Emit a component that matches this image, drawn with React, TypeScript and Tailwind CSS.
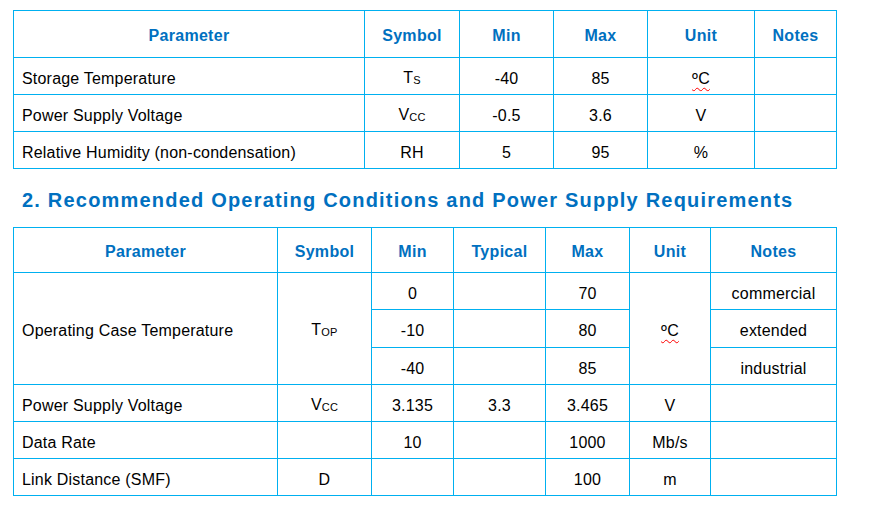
import React from "react";

const B = "border border-[#00B0F0]";
const TH = `${B} text-center font-bold text-[#0070C0] pt-[3px] tracking-[0.3px]`;
const TD = `${B} text-center pt-[5px] tracking-[0.2px]`;
const TDL = `${B} text-left pl-[8px] pt-[5px] tracking-[0.2px]`;

function Sym({ main, sub }: { main: string; sub: string }) {
  return (
    <span>
      {main}
      <span className="text-[11px] align-[-1px]">{sub}</span>
    </span>
  );
}

function Deg() {
  return (
    <span className="underline decoration-wavy decoration-[#ff0000] decoration-1 underline-offset-[3px]">
      ºC
    </span>
  );
}

export default function App() {
  return (
    <div
      className="bg-white w-[872px] h-[523px] pt-[10px] pl-[13px] text-black text-[16px] leading-[18px]"
      style={{ fontFamily: '"Liberation Sans", Arial, sans-serif' }}
    >
      <table className="border-collapse table-fixed w-[824px]">
        <colgroup>
          <col className="w-[351px]" />
          <col className="w-[95px]" />
          <col className="w-[94px]" />
          <col className="w-[94px]" />
          <col className="w-[107px]" />
          <col className="w-[82px]" />
        </colgroup>
        <tbody>
          <tr className="h-[47px]">
            <td className={TH}>Parameter</td>
            <td className={TH}>Symbol</td>
            <td className={TH}>Min</td>
            <td className={TH}>Max</td>
            <td className={TH}>Unit</td>
            <td className={TH}>Notes</td>
          </tr>
          <tr className="h-[37px]">
            <td className={TDL}>Storage Temperature</td>
            <td className={TD}>
              <Sym main="T" sub="S" />
            </td>
            <td className={TD}>-40</td>
            <td className={TD}>85</td>
            <td className={TD}>
              <Deg />
            </td>
            <td className={TD}></td>
          </tr>
          <tr className="h-[37px]">
            <td className={TDL}>Power Supply Voltage</td>
            <td className={TD}>
              <Sym main="V" sub="CC" />
            </td>
            <td className={TD}>-0.5</td>
            <td className={TD}>3.6</td>
            <td className={TD}>V</td>
            <td className={TD}></td>
          </tr>
          <tr className="h-[37px]">
            <td className={TDL}>Relative Humidity (non-condensation)</td>
            <td className={TD}>RH</td>
            <td className={TD}>5</td>
            <td className={TD}>95</td>
            <td className={TD}>%</td>
            <td className={TD}></td>
          </tr>
        </tbody>
      </table>

      <div className="mt-[19px] mb-[15px] pl-[9px] text-[20px] leading-[24px] font-bold text-[#0070C0] tracking-[1.2px]">
        2. Recommended Operating Conditions and Power Supply Requirements
      </div>

      <table className="border-collapse table-fixed w-[824px]">
        <colgroup>
          <col className="w-[264px]" />
          <col className="w-[94px]" />
          <col className="w-[82px]" />
          <col className="w-[92px]" />
          <col className="w-[84px]" />
          <col className="w-[81px]" />
          <col className="w-[126px]" />
        </colgroup>
        <tbody>
          <tr className="h-[45px]">
            <td className={TH}>Parameter</td>
            <td className={TH}>Symbol</td>
            <td className={TH}>Min</td>
            <td className={TH}>Typical</td>
            <td className={TH}>Max</td>
            <td className={TH}>Unit</td>
            <td className={TH}>Notes</td>
          </tr>
          <tr className="h-[37px]">
            <td className={TDL} rowSpan={3}>
              Operating Case Temperature
            </td>
            <td className={TD} rowSpan={3}>
              <Sym main="T" sub="OP" />
            </td>
            <td className={TD}>0</td>
            <td className={TD}></td>
            <td className={TD}>70</td>
            <td className={TD} rowSpan={3}>
              <Deg />
            </td>
            <td className={TD}>commercial</td>
          </tr>
          <tr className="h-[38px]">
            <td className={TD}>-10</td>
            <td className={TD}></td>
            <td className={TD}>80</td>
            <td className={TD}>extended</td>
          </tr>
          <tr className="h-[37px]">
            <td className={TD}>-40</td>
            <td className={TD}></td>
            <td className={TD}>85</td>
            <td className={TD}>industrial</td>
          </tr>
          <tr className="h-[37px]">
            <td className={TDL}>Power Supply Voltage</td>
            <td className={TD}>
              <Sym main="V" sub="CC" />
            </td>
            <td className={TD}>3.135</td>
            <td className={TD}>3.3</td>
            <td className={TD}>3.465</td>
            <td className={TD}>V</td>
            <td className={TD}></td>
          </tr>
          <tr className="h-[37px]">
            <td className={TDL}>Data Rate</td>
            <td className={TD}></td>
            <td className={TD}>10</td>
            <td className={TD}></td>
            <td className={TD}>1000</td>
            <td className={TD}>Mb/s</td>
            <td className={TD}></td>
          </tr>
          <tr className="h-[37px]">
            <td className={TDL}>Link Distance (SMF)</td>
            <td className={TD}>D</td>
            <td className={TD}></td>
            <td className={TD}></td>
            <td className={TD}>100</td>
            <td className={TD}>m</td>
            <td className={TD}></td>
          </tr>
        </tbody>
      </table>
    </div>
  );
}
